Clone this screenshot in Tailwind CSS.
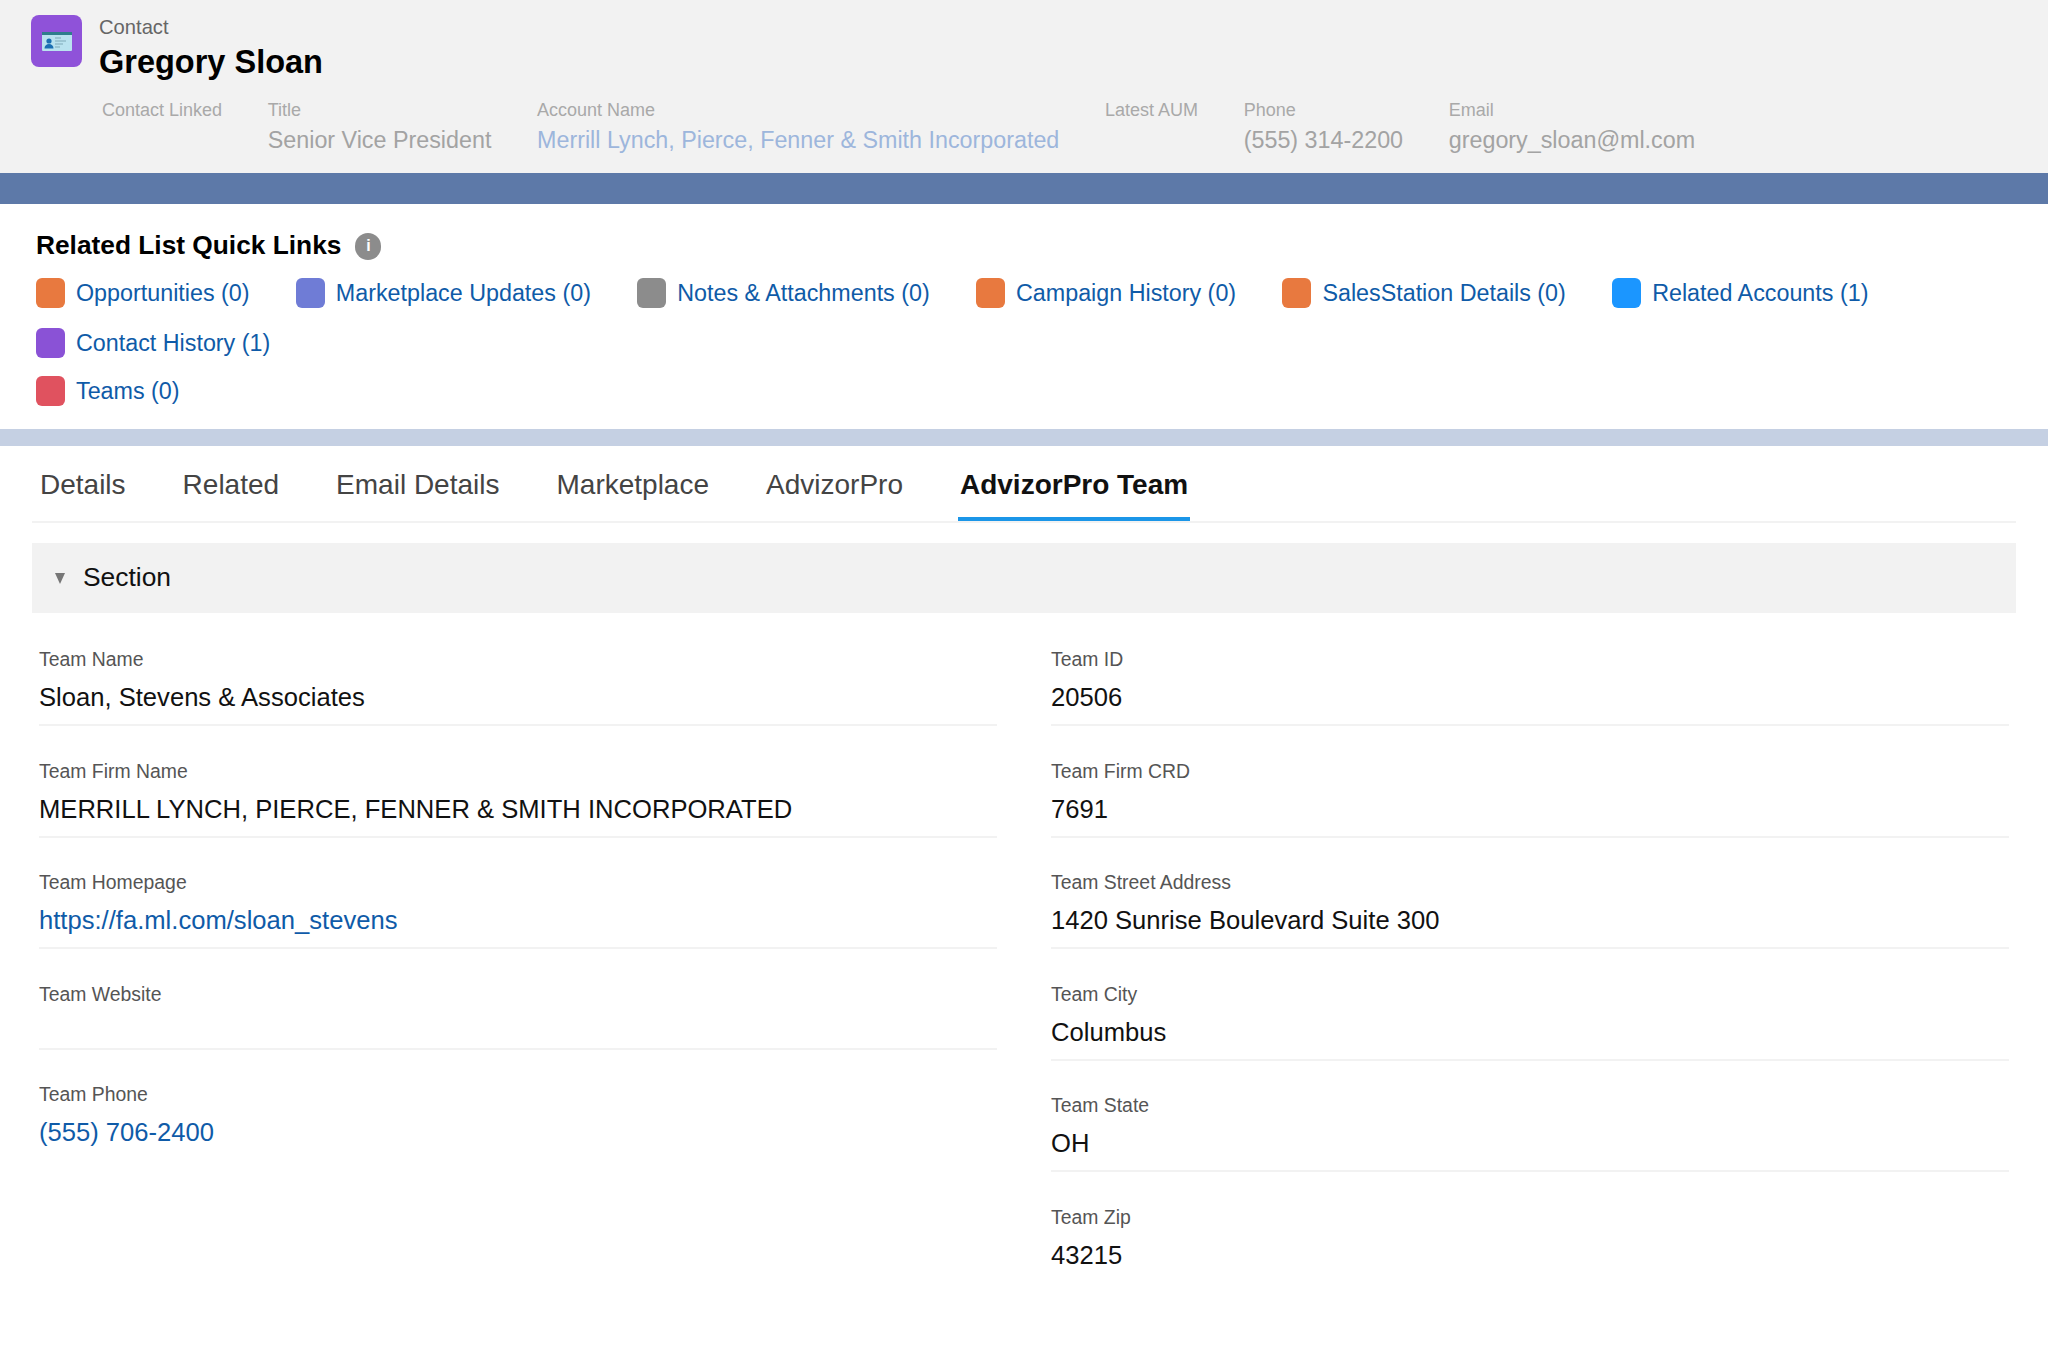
<!DOCTYPE html>
<html lang="en">
<head>
  <meta charset="UTF-8" />
  <title>Gregory Sloan | Contact</title>
  <script src="https://cdn.jsdelivr.net/npm/@tailwindcss/browser@4"></script>
</head>
<body class="bg-white min-h-screen font-['Liberation_Sans',Arial,sans-serif] text-[#111]">
  <!-- record header -->
  <header class="bg-[#f2f2f2] h-[173px] pt-[15px] pl-[31px]">
    <div class="flex">
      <div class="w-[51px] h-[52px] rounded-[8px] bg-[#8f52d9] flex items-center justify-center">
        <svg width="30" height="19" viewBox="0 0 30 19">
          <rect width="30" height="19" rx="1" fill="#b9e2ef"/>
          <rect width="30" height="3" fill="#2f7d8c"/>
          <circle cx="7" cy="9" r="2.6" fill="#1a6fb3"/>
          <path d="M2.5 16.5c0-3 2-4.5 4.5-4.5s4.5 1.5 4.5 4.5z" fill="#1a6fb3"/>
          <path d="M13 6h6M13 9h11M13 12h8M13 15h5" stroke="#7fa9b8" stroke-width="1"/>
        </svg>
      </div>
      <div class="ml-[17px]">
        <div class="text-[20.2px] leading-[24px] text-[#666]">Contact</div>
        <div class="text-[32.5px] leading-[38px] mt-[4px] font-bold text-black">Gregory Sloan</div>
      </div>
    </div>
    <dl class="flex gap-[45.7px] ml-[71px] mt-[17px]">
      <div>
        <dt class="text-[18px] leading-[24px] text-[#a9a9a9]">Contact Linked</dt>
      </div>
      <div>
        <dt class="text-[18px] leading-[24px] text-[#a9a9a9]">Title</dt>
        <dd class="text-[23.3px] leading-[30px] mt-[3px] text-[#a3a3a3]">Senior Vice President</dd>
      </div>
      <div>
        <dt class="text-[18px] leading-[24px] text-[#a9a9a9]">Account Name</dt>
        <dd class="text-[23.3px] leading-[30px] mt-[3px] text-[#9db6dc]">Merrill Lynch, Pierce, Fenner &amp; Smith Incorporated</dd>
      </div>
      <div>
        <dt class="text-[18px] leading-[24px] text-[#a9a9a9]">Latest AUM</dt>
      </div>
      <div>
        <dt class="text-[18px] leading-[24px] text-[#a9a9a9]">Phone</dt>
        <dd class="text-[23.3px] leading-[30px] mt-[3px] text-[#a3a3a3]">(555) 314-2200</dd>
      </div>
      <div>
        <dt class="text-[18px] leading-[24px] text-[#a9a9a9]">Email</dt>
        <dd class="text-[23.3px] leading-[30px] mt-[3px] text-[#a3a3a3]">gregory_sloan@ml.com</dd>
      </div>
    </dl>
  </header>
  <div class="h-[31px] bg-[#5d79a8]"></div>

  <!-- quick links -->
  <section class="h-[225px] pl-[36px] pt-[27px]">
    <div class="flex items-center h-[30px]">
      <h2 class="text-[26.3px] font-bold text-black">Related List Quick Links</h2>
      <span class="ml-[14px] w-[26px] h-[27px] rounded-full bg-[#8c8c8c] text-white text-[16px] font-bold flex items-center justify-center">i</span>
    </div>
    <div class="mt-[17px] flex gap-[46.3px] text-[23.3px] leading-[30px] text-[#0f5ba8]">
      <a class="flex gap-[11px]"><span class="w-[29px] h-[30px] rounded-[6px] bg-[#e8793f]"></span>Opportunities (0)</a>
      <a class="flex gap-[11px]"><span class="w-[29px] h-[30px] rounded-[6px] bg-[#6f7cd6]"></span>Marketplace Updates (0)</a>
      <a class="flex gap-[11px]"><span class="w-[29px] h-[30px] rounded-[6px] bg-[#8c8c8c]"></span>Notes &amp; Attachments (0)</a>
      <a class="flex gap-[11px]"><span class="w-[29px] h-[30px] rounded-[6px] bg-[#e8793f]"></span>Campaign History (0)</a>
      <a class="flex gap-[11px]"><span class="w-[29px] h-[30px] rounded-[6px] bg-[#e8793f]"></span>SalesStation Details (0)</a>
      <a class="flex gap-[11px]"><span class="w-[29px] h-[30px] rounded-[6px] bg-[#1b96ff]"></span>Related Accounts (1)</a>
    </div>
    <div class="mt-[20px] flex text-[23.3px] leading-[30px] text-[#0f5ba8]">
      <a class="flex gap-[11px]"><span class="w-[29px] h-[30px] rounded-[6px] bg-[#8a52d6]"></span>Contact History (1)</a>
    </div>
    <div class="mt-[18px] flex text-[23.3px] leading-[30px] text-[#0f5ba8]">
      <a class="flex gap-[11px]"><span class="w-[29px] h-[30px] rounded-[6px] bg-[#e0525f]"></span>Teams (0)</a>
    </div>
  </section>
  <div class="h-[17px] bg-[#c5d0e3]"></div>

  <!-- tabs -->
  <main class="px-[32px]">
    <nav class="flex items-start gap-[57px] h-[77px] border-b-2 border-[#f2f2f2] pl-[8px] text-[28px] text-[#444]">
      <a class="pt-[18px]">Details</a>
      <a class="pt-[18px]">Related</a>
      <a class="pt-[18px]">Email Details</a>
      <a class="pt-[18px]">Marketplace</a>
      <a class="pt-[18px]">AdvizorPro</a>
      <a class="pt-[18px] font-bold text-[#111] h-[75px] border-b-[4px] border-[#1b96e8] px-[2px] -ml-[2px]">AdvizorPro Team</a>
    </nav>

    <div class="mt-[20px] h-[70px] bg-[#f2f2f2] flex items-center pl-[23px] text-[26.4px] text-[#111]">
      <span class="w-0 h-0 border-x-[5.5px] border-x-transparent border-t-[11px] border-t-[#777]"></span>
      <span class="ml-[18px]">Section</span>
    </div>

    <div class="mt-[34px] grid grid-cols-2 gap-x-[54px] px-[7px]">
      <div>
        <div class="h-[111.5px]">
          <div class="text-[19.4px] leading-[25px] text-[#555]">Team Name</div>
          <div class="text-[25.6px] leading-[34px] mt-[8px] pb-[10px] border-b-2 border-[#f2f2f2]">Sloan, Stevens &amp; Associates</div>
        </div>
        <div class="h-[111.5px]">
          <div class="text-[19.4px] leading-[25px] text-[#555]">Team Firm Name</div>
          <div class="text-[25.6px] leading-[34px] mt-[8px] pb-[10px] border-b-2 border-[#f2f2f2]">MERRILL LYNCH, PIERCE, FENNER &amp; SMITH INCORPORATED</div>
        </div>
        <div class="h-[111.5px]">
          <div class="text-[19.4px] leading-[25px] text-[#555]">Team Homepage</div>
          <div class="text-[25.6px] leading-[34px] mt-[8px] pb-[10px] border-b-2 border-[#f2f2f2] text-[#0f5ba8]">https://fa.ml.com/sloan_stevens</div>
        </div>
        <div class="h-[100px]">
          <div class="text-[19.4px] leading-[25px] text-[#555]">Team Website</div>
          <div class="h-[23px] mt-[8px] pb-[10px] box-content border-b-2 border-[#f2f2f2]"></div>
        </div>
        <div>
          <div class="text-[19.4px] leading-[25px] text-[#555]">Team Phone</div>
          <div class="text-[25.6px] leading-[34px] mt-[8px] text-[#0f5ba8]">(555) 706-2400</div>
        </div>
      </div>
      <div>
        <div class="h-[111.5px]">
          <div class="text-[19.4px] leading-[25px] text-[#555]">Team ID</div>
          <div class="text-[25.6px] leading-[34px] mt-[8px] pb-[10px] border-b-2 border-[#f2f2f2]">20506</div>
        </div>
        <div class="h-[111.5px]">
          <div class="text-[19.4px] leading-[25px] text-[#555]">Team Firm CRD</div>
          <div class="text-[25.6px] leading-[34px] mt-[8px] pb-[10px] border-b-2 border-[#f2f2f2]">7691</div>
        </div>
        <div class="h-[111.5px]">
          <div class="text-[19.4px] leading-[25px] text-[#555]">Team Street Address</div>
          <div class="text-[25.6px] leading-[34px] mt-[8px] pb-[10px] border-b-2 border-[#f2f2f2]">1420 Sunrise Boulevard Suite 300</div>
        </div>
        <div class="h-[111.5px]">
          <div class="text-[19.4px] leading-[25px] text-[#555]">Team City</div>
          <div class="text-[25.6px] leading-[34px] mt-[8px] pb-[10px] border-b-2 border-[#f2f2f2]">Columbus</div>
        </div>
        <div class="h-[111.5px]">
          <div class="text-[19.4px] leading-[25px] text-[#555]">Team State</div>
          <div class="text-[25.6px] leading-[34px] mt-[8px] pb-[10px] border-b-2 border-[#f2f2f2]">OH</div>
        </div>
        <div>
          <div class="text-[19.4px] leading-[25px] text-[#555]">Team Zip</div>
          <div class="text-[25.6px] leading-[34px] mt-[8px]">43215</div>
        </div>
      </div>
    </div>
  </main>
</body>
</html>
